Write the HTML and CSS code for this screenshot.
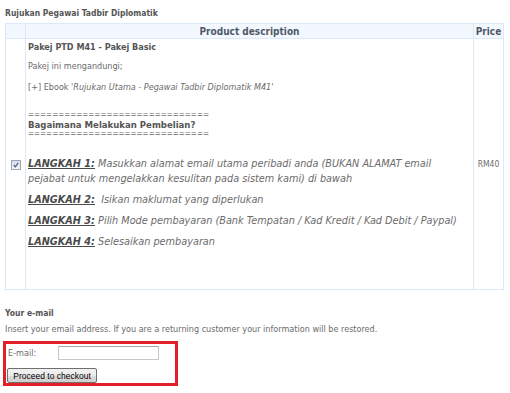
FILE: index.html
```html
<!DOCTYPE html>
<html lang="ms">
<head>
  <meta charset="UTF-8">
  <title>Rujukan Pegawai Tadbir Diplomatik</title>
  <link rel="stylesheet" href="styles.css">
</head>
<body>
  <div class="page">
    <h1 class="title">Rujukan Pegawai Tadbir Diplomatik</h1>

    <table class="products">
      <thead>
        <tr>
          <th class="col-check"></th>
          <th class="col-desc">Product description</th>
          <th class="col-price">Price</th>
        </tr>
      </thead>
      <tbody>
        <tr>
          <td class="col-check"><span class="checkbox"><svg viewBox="0 0 9 9" width="9" height="9"><path d="M2 4.5 L3.8 6.5 L7 2.2" fill="none" stroke="#3a5a8c" stroke-width="1.3"/></svg></span></td>
          <td class="col-desc">
            <p class="pkg-name">Pakej PTD M41 - Pakej Basic</p>
            <p class="small">Pakej ini mengandungi;</p>
            <p class="small">[+] Ebook '<em>Rujukan Utama - Pegawai Tadbir Diplomatik M41</em>'</p>
            <div class="howto">
              <div>==============================</div>
              <div class="howto-title">Bagaimana Melakukan Pembelian?</div>
              <div>==============================</div>
            </div>
            <p class="step"><span class="step-label">LANGKAH 1:</span> Masukkan alamat email utama peribadi anda (BUKAN ALAMAT email pejabat untuk mengelakkan kesulitan pada sistem kami) di bawah</p>
            <p class="step"><span class="step-label">LANGKAH 2:</span>&nbsp; Isikan maklumat yang diperlukan</p>
            <p class="step"><span class="step-label">LANGKAH 3:</span> Pilih Mode pembayaran (Bank Tempatan / Kad Kredit / Kad Debit / Paypal)</p>
            <p class="step"><span class="step-label">LANGKAH 4:</span> Selesaikan pembayaran</p>
          </td>
          <td class="col-price">RM40</td>
        </tr>
      </tbody>
    </table>

    <div class="email-section">
      <h2 class="section-title">Your e-mail</h2>
      <p class="small">Insert your email address. If you are a returning customer your information will be restored.</p>
      <form class="checkout-box">
        <div class="field">
          <label for="email">E-mail:</label>
          <input type="text" id="email" class="email-input">
        </div>
        <button type="button" class="checkout-btn">Proceed to checkout</button>
      </form>
    </div>
  </div>
</body>
</html>
```
FILE: styles.css
```css
/* Base page */
body {
  margin: 0;
  background: #ffffff;
  font-family: "DejaVu Sans Condensed", "DejaVu Sans", sans-serif;
  color: #6b6b6b;
}

.page {
  padding: 8px 5px 0 5px;
}

.title {
  margin: 0 0 5px 0;
  font-size: 8.5px;
  line-height: 10px;
  font-weight: bold;
  color: #555555;
}

/* Product table */
.products {
  width: 499px;
  border-collapse: collapse;
  border: 1px solid #d5e5fa;
}

.products th,
.products td {
  border: 1px solid #dce9fb;
  padding: 0;
}

.products th {
  height: 14px;
  background-color: #f2f8fe;
  font-size: 10px;
  font-weight: bold;
  color: #505868;
}

.col-check {
  width: 19px;
  text-align: center;
}

.col-price {
  width: 29px;
  font-size: 8.5px;
  text-align: center;
}

.products td {
  height: 247px;
}

.products td.col-desc {
  vertical-align: top;
  padding: 3px 4px 0 2px;
}

.products td.col-check,
.products td.col-price {
  vertical-align: middle;
  padding-bottom: 1px;
}

.checkbox {
  display: inline-block;
  width: 8px;
  height: 8px;
  border: 1px solid #9aa6b8;
  background: linear-gradient(#dadde3, #f3f4f6);
  vertical-align: middle;
}

.checkbox svg {
  display: block;
  width: 8px;
  height: 8px;
}

.pkg-name {
  margin: 0 0 9px 0;
  font-size: 9px;
  line-height: 10px;
  font-weight: bold;
  color: #555555;
}

.small {
  margin: 0 0 11px 0;
  font-size: 9px;
  line-height: 10px;
}

.small em {
  font-style: italic;
}

.howto {
  margin: 18px 0 17px 0;
  font-size: 8px;
  line-height: 9.5px;
}

.howto-title {
  font-weight: bold;
  font-size: 9.5px;
  color: #555555;
}

/* Steps */
.step {
  margin: 0 0 6px 0;
  font-size: 10.8px;
  line-height: 15px;
  font-style: italic;
  color: #6b6b6b;
}

.step-label {
  font-weight: bold;
  text-decoration: underline;
  color: #4a4a4a;
}

/* E-mail section */
.email-section {
  padding-top: 18px;
}

.section-title {
  margin: 0 0 6px 0;
  font-size: 8.5px;
  line-height: 10px;
  font-weight: bold;
  color: #555555;
}

.email-section .small {
  margin-bottom: 7px;
}

.checkout-box {
  display: inline-block;
  margin-left: -2px;
  width: 167px;
  padding: 2px 0 0 2px;
  border: 3px solid #e3202a;
}

.field {
  display: flex;
  align-items: center;
  height: 14px;
  margin-bottom: 8px;
}

.field label {
  width: 50px;
  font-size: 9px;
}

.email-input {
  box-sizing: border-box;
  width: 101px;
  height: 14px;
  margin: 0;
  padding: 0 2px;
  border: 1px solid #c8c8c8;
  border-top-color: #a8a8a8;
  background: #ffffff;
}

.checkout-btn {
  display: block;
  box-sizing: border-box;
  width: 90px;
  height: 15px;
  margin: 0 0 0 -1px;
  padding: 0;
  border: 1px solid #707070;
  border-radius: 2px;
  background: linear-gradient(#f2f2f2 0%, #ebebeb 50%, #dddddd 51%, #cfcfcf 100%);
  font-family: "Liberation Sans", Arial, sans-serif;
  font-size: 8.5px;
  color: #000000;
}
```
